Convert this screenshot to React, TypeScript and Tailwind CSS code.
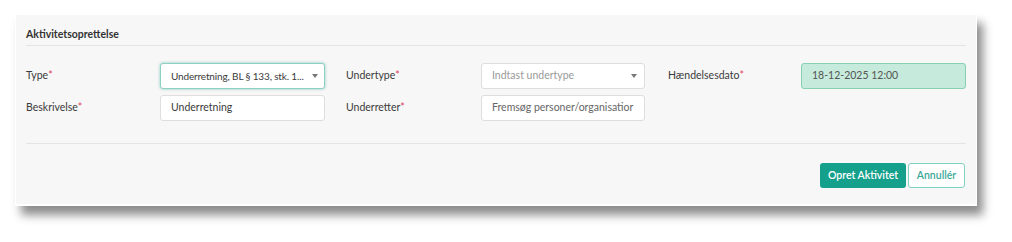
const Label = ({ text, className = "" }: { text: string; className?: string }) => (
  <div className={`flex items-center text-[10.5px] text-[#3a3a3a] ${className}`}>
    {text}
    <span className="text-[#e0455e]">*</span>
  </div>
);

const Caret = () => (
  <svg width="6" height="4" viewBox="0 0 6 4" className="shrink-0">
    <path d="M0 0h6L3 4z" fill="#777" />
  </svg>
);

export default function App() {
  return (
    <div className="min-h-[242px] bg-white pl-[15px] pt-[14px] font-['Lato','Open_Sans',sans-serif]">
      <div className="w-[962px] h-[192px] bg-[#f7f7f7] border border-white border-b-2 shadow-[6px_9px_9px_rgba(0,0,0,0.45)] px-[10px] flex flex-col">
        <div className="pt-[11px] pb-[3px] border-b border-[#e4e4e4]">
          <h2 className="text-[10.5px] leading-4 font-bold text-[#333]">Aktivitetsoprettelse</h2>
        </div>

        <div className="grid grid-cols-[134px_165px_156px_164px_156px_165px] gap-y-[6px] pt-[17px] pb-[22px] border-b border-[#e4e4e4]">
          <Label text="Type" />
          <div className="h-[26px] flex items-center justify-between gap-[2px] pl-[10px] pr-[6px] bg-white border border-[#8dd0c4] rounded-[3px] shadow-[0_0_3px_rgba(60,170,150,0.6)]">
            <span className="min-w-0 text-[10px] tracking-[-0.15px] text-[#3a3a3a] whitespace-nowrap">Underretning, BL § 133, stk. 1...</span>
            <Caret />
          </div>
          <Label text="Undertype" className="pl-[21px]" />
          <div className="h-[26px] flex items-center justify-between pl-[10px] pr-[7px] bg-white border border-[#dedede] rounded-[3px]">
            <span className="text-[10.5px] text-[#999]">Indtast undertype</span>
            <Caret />
          </div>
          <Label text="Hændelsesdato" className="pl-[23px]" />
          <div className="h-[26px] flex items-center pl-[10px] bg-[#c6eadb] border border-[#87d0b1] rounded-[3px]">
            <span className="text-[10.5px] text-[#555]">18-12-2025 12:00</span>
          </div>

          <Label text="Beskrivelse" />
          <div className="h-[26px] flex items-center pl-[10px] bg-white border border-[#dedede] rounded-[3px]">
            <span className="text-[10.5px] text-[#3a3a3a]">Underretning</span>
          </div>
          <Label text="Underretter" className="pl-[21px]" />
          <div className="h-[26px] flex items-center pl-[10px] bg-white border border-[#dedede] rounded-[3px] overflow-hidden">
            <span className="text-[10.5px] text-[#666] whitespace-nowrap">Fremsøg personer/organisatior</span>
          </div>
          <div />
          <div />
        </div>

        <div className="flex justify-end gap-[2px] pt-[19px] pr-[1px]">
          <button className="h-[25px] w-[86px] rounded-[3px] bg-[#14a08b] text-white text-[10.5px] font-semibold">
            Opret Aktivitet
          </button>
          <button className="h-[25px] w-[57px] rounded-[3px] bg-white border border-[#80d0c4] text-[#3aa797] text-[10.5px] font-semibold">
            Annullér
          </button>
        </div>
      </div>
    </div>
  );
}
